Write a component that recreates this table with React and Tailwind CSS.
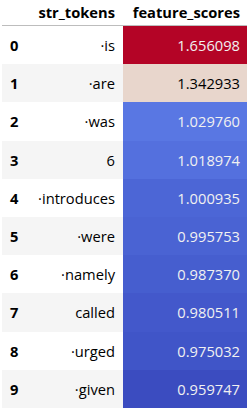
const rows = [
    { idx: 0, tok: '·is', score: '1.656098', bg: 'bg-[#b40426]', fg: 'text-[#f1f1f1]' },
    { idx: 1, tok: '·are', score: '1.342933', bg: 'bg-[#e8d6cc]', fg: 'text-black' },
    { idx: 2, tok: '·was', score: '1.029760', bg: 'bg-[#5977e3]', fg: 'text-[#f1f1f1]' },
    { idx: 3, tok: '6', score: '1.018974', bg: 'bg-[#5470de]', fg: 'text-[#f1f1f1]' },
    { idx: 4, tok: '·introduces', score: '1.000935', bg: 'bg-[#4c66d6]', fg: 'text-[#f1f1f1]' },
    { idx: 5, tok: '·were', score: '0.995753', bg: 'bg-[#4a63d3]', fg: 'text-[#f1f1f1]' },
    { idx: 6, tok: '·namely', score: '0.987370', bg: 'bg-[#465ecf]', fg: 'text-[#f1f1f1]' },
    { idx: 7, tok: 'called', score: '0.980511', bg: 'bg-[#4358cb]', fg: 'text-[#f1f1f1]' },
    { idx: 8, tok: '·urged', score: '0.975032', bg: 'bg-[#4055c8]', fg: 'text-[#f1f1f1]' },
    { idx: 9, tok: '·given', score: '0.959747', bg: 'bg-[#3b4cc0]', fg: 'text-[#f1f1f1]' },
]

export default function App() {
    return (
        <div className="w-[247px] h-[409px] bg-white overflow-hidden text-[14.7px] text-black" style={{ fontFamily: '"Open Sans", "Noto Sans", sans-serif' }}>
            <div className="ml-[2px]">
                {/* header */}
                <div className="flex h-[26px] items-center border-b border-[#bdbdbd] font-bold">
                    <div className="w-[28px]"></div>
                    <div className="w-[93px] text-right pr-[8px]">str_tokens</div>
                    <div className="flex-1 text-right pr-[7px]">feature_scores</div>
                </div>

                {rows.map((r) => (
                    <div key={r.idx} className={`flex h-[38.2px] items-center ${r.idx % 2 === 1 ? 'bg-[#f5f5f5]' : 'bg-white'}`}>
                        <div className="w-[28px] pl-[8px] font-bold">{r.idx}</div>
                        <div className="w-[93px] text-right pr-[8px]">{r.tok}</div>
                        <div className={`flex-1 h-full flex items-center justify-end pr-[7px] ${r.bg} ${r.fg}`}>{r.score}</div>
                    </div>
                ))}
            </div>
        </div>
    )
}
